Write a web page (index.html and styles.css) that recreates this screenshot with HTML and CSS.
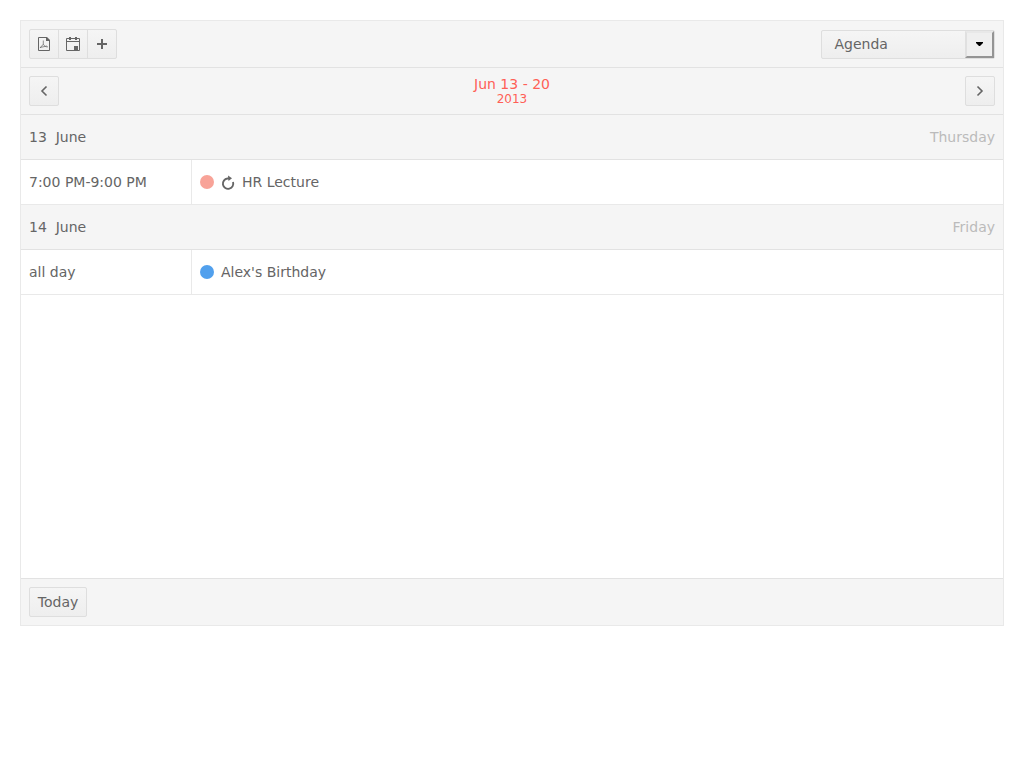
FILE: index.html
```html
<!DOCTYPE html>
<html lang="en">
<head>
<meta charset="utf-8">
<title>Scheduler</title>
<link rel="stylesheet" href="styles.css">
</head>
<body>
<main class="scheduler">
  <header class="bar">
    <div class="group">
      <button class="btn" aria-label="Export PDF">
        <svg class="icon" viewBox="0 0 16 16"><path d="M2.500 1.500H10.500V4.500H13.500V14.500H2.500Z" fill="none" stroke="#656565"/><path d="M10 1H11L14 4V5H10Z" fill="#656565"/><path d="M7.300 4.500V8.200L4 12M7.300 8.200C8.500 10.500 10 11 12 10.800M4 11.500L11 10" fill="none" stroke="#656565" stroke-width=".9" opacity=".8"/></svg>
      </button>
      <button class="btn" aria-label="Calendar">
        <svg class="icon" viewBox="0 0 16 16"><path d="M1.500 2.500H14.500V14.500H1.500ZM1 5.500H15" fill="none" stroke="#656565"/><path d="M4 1H6V4H4ZM10 1H12V4H10ZM9 10H13V14H9Z" fill="#656565"/></svg>
      </button>
      <button class="btn" aria-label="Add">
        <svg class="icon" viewBox="0 0 16 16"><path d="M8 3V13M3 8H13" stroke="#656565" stroke-width="2"/></svg>
      </button>
    </div>
    <div class="dropdown">
      <span class="dropdown-text">Agenda</span>
      <button class="dropdown-arrow" aria-label="Select view"><svg class="icon" viewBox="0 0 16 16"><path d="M5 6H12V7L9 10H8L5 7Z" fill="#000"/></svg></button>
    </div>
  </header>
  <nav class="bar">
    <button class="btn" aria-label="Previous"><svg class="icon" viewBox="0 0 16 16"><path d="M10.500 3.500L6 8L10.500 12.500" fill="none" stroke="#656565" stroke-width="1.600"/></svg></button>
    <div class="range"><span>Jun 13 - 20</span><small class="year">2013</small></div>
    <button class="btn" aria-label="Next"><svg class="icon" viewBox="0 0 16 16"><path d="M5.500 3.500L10 8L5.500 12.500" fill="none" stroke="#656565" stroke-width="1.600"/></svg></button>
  </nav>
  <section class="agenda">
    <div class="day"><span>13&nbsp; June</span><span class="weekday">Thursday</span></div>
    <div class="event">
      <div class="time">7:00 PM-9:00 PM</div>
      <div class="detail"><i class="dot lecture"></i><svg class="repeat" viewBox="0 0 14 16"><path d="M8.500 3.500H6.500A5.200 5.200 0 1 0 12 7" fill="none" stroke="#656565" stroke-width="1.900"/><path d="M7 0.500L11 3.200L7.500 6Z" fill="#656565"/></svg><span>HR Lecture</span></div>
    </div>
    <div class="day"><span>14&nbsp; June</span><span class="weekday">Friday</span></div>
    <div class="event">
      <div class="time">all day</div>
      <div class="detail"><i class="dot birthday"></i><span>Alex's Birthday</span></div>
    </div>
  </section>
  <footer class="bar footer"><button class="btn today">Today</button></footer>
</main>
</body>
</html>
```
FILE: styles.css
```css
* { box-sizing: border-box; }
body {
  margin: 20px;
  background: #fff;
  color: #656565;
  font: 14px/20px "DejaVu Sans", sans-serif;
}
.scheduler {
  display: flex;
  flex-direction: column;
  height: 606px;
  border: 1px solid #e9e9e9;
}
.bar {
  display: flex;
  flex: none;
  align-items: center;
  justify-content: space-between;
  height: 47px;
  padding: 0 8px;
  background: #f5f5f5;
  border-bottom: 1px solid #e2e2e2;
}
.footer {
  border-top: 1px solid #e2e2e2;
  border-bottom: 0;
}
.group { display: flex; }
.btn {
  display: flex;
  align-items: center;
  justify-content: center;
  width: 30px;
  height: 30px;
  padding: 0;
  color: inherit;
  font: inherit;
  background: linear-gradient(#f5f5f5, #eee);
  border: 1px solid #dedede;
  border-radius: 2px;
}
.group .btn { border-radius: 0; }
.group .btn + .btn { margin-left: -1px; }
.group .btn:first-child { border-radius: 2px 0 0 2px; }
.group .btn:last-child { border-radius: 0 2px 2px 0; }
.today { width: 58px; }
.icon {
  display: block;
  flex: none;
  width: 16px;
  height: 16px;
}
.dropdown {
  display: flex;
  width: 174px;
  height: 29px;
  margin-top: 1px;
  background: linear-gradient(#f5f5f5, #eee);
  border: 1px solid #dedede;
  border-radius: 2px;
}
.dropdown-text {
  flex: 1;
  padding-left: 12.5px;
  line-height: 27px;
}
.dropdown-arrow {
  display: flex;
  align-items: center;
  justify-content: center;
  width: 29px;
  padding: 0 1px 1px 0;
  background: #efefef;
  border: 2px solid;
  border-color: #e8e8e8 #949494 #949494 #e0e0e0;
}
.range {
  display: flex;
  flex-direction: column;
  align-items: center;
  color: #ff5f57;
  line-height: 16px;
}
.year {
  font-size: 12px;
  line-height: 14px;
}
.agenda { flex: 1; }
.day {
  display: flex;
  align-items: center;
  justify-content: space-between;
  height: 45px;
  padding: 0 8px;
  background: #f5f5f5;
  border-bottom: 1px solid #e2e2e2;
}
.weekday { color: #bbb; }
.event {
  display: flex;
  height: 45px;
  border-bottom: 1px solid #e9e9e9;
}
.time {
  width: 171px;
  padding: 12px 8px;
  border-right: 1px solid #e9e9e9;
}
.detail {
  display: flex;
  align-items: center;
  padding: 0 8px;
  gap: 7px;
}
.dot {
  width: 14px;
  height: 14px;
  border-radius: 50%;
}
.lecture { background: #f8a398; }
.birthday { background: #51a0ed; }
.repeat {
  width: 14px;
  height: 16px;
  margin-top: 2px;
}
```
